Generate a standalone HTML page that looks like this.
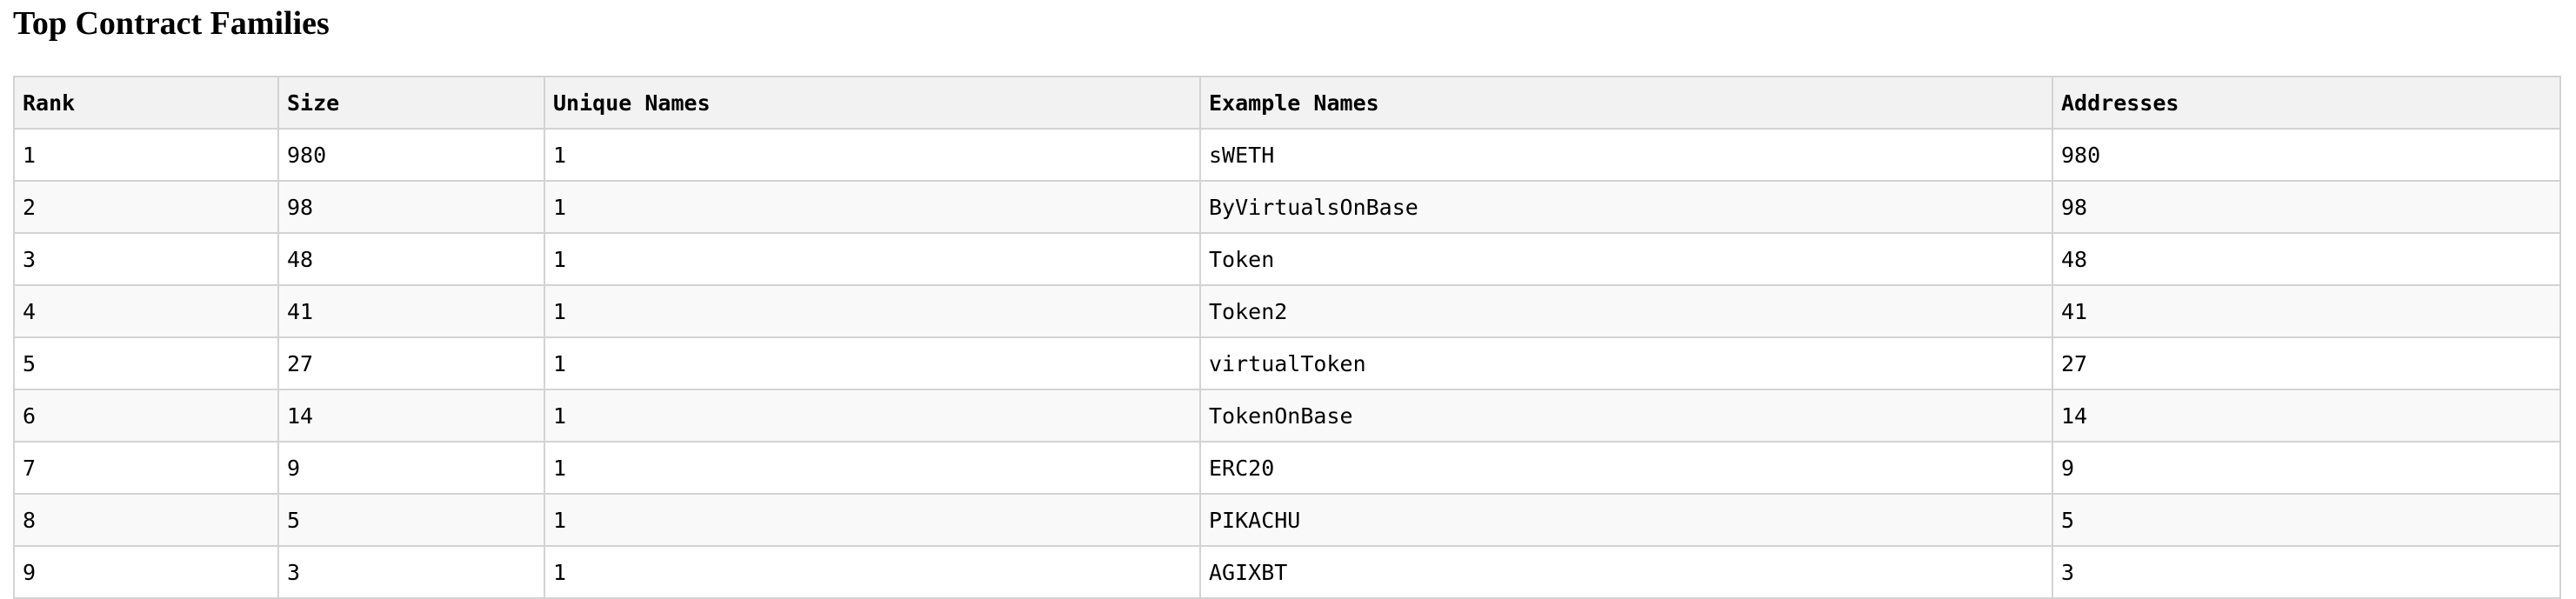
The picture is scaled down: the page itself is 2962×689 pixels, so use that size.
<!DOCTYPE html>
<html><head><style>
body{margin:0;background:#fff;width:2962px;height:688px;overflow:hidden}
h3{position:absolute;left:15px;top:5px;margin:0;font:bold 38px "Liberation Serif",serif;color:#000}
table{position:absolute;left:15px;top:87px;border-collapse:collapse;table-layout:fixed;width:2928px;font-family:"DejaVu Sans Mono","Liberation Mono",monospace;font-size:25px;color:#000}
td,th{border:2px solid #d3d3d3;height:58px;box-sizing:border-box;padding:0 0 0 9px;text-align:left;vertical-align:middle;white-space:nowrap}
tr{height:60px}
th{background:#f2f2f2;font-weight:bold}
tr:nth-child(odd) td{background:#f9f9f9}
</style></head><body>
<h3>Top Contract Families</h3>
<table>
<colgroup><col style="width:304px"><col style="width:306px"><col style="width:754px"><col style="width:980px"><col style="width:584px"></colgroup>
<tr><th>Rank</th><th>Size</th><th>Unique Names</th><th>Example Names</th><th>Addresses</th></tr>
<tr><td>1</td><td>980</td><td>1</td><td>sWETH</td><td>980</td></tr>
<tr><td>2</td><td>98</td><td>1</td><td>ByVirtualsOnBase</td><td>98</td></tr>
<tr><td>3</td><td>48</td><td>1</td><td>Token</td><td>48</td></tr>
<tr><td>4</td><td>41</td><td>1</td><td>Token2</td><td>41</td></tr>
<tr><td>5</td><td>27</td><td>1</td><td>virtualToken</td><td>27</td></tr>
<tr><td>6</td><td>14</td><td>1</td><td>TokenOnBase</td><td>14</td></tr>
<tr><td>7</td><td>9</td><td>1</td><td>ERC20</td><td>9</td></tr>
<tr><td>8</td><td>5</td><td>1</td><td>PIKACHU</td><td>5</td></tr>
<tr><td>9</td><td>3</td><td>1</td><td>AGIXBT</td><td>3</td></tr>
</table>
</body></html>
